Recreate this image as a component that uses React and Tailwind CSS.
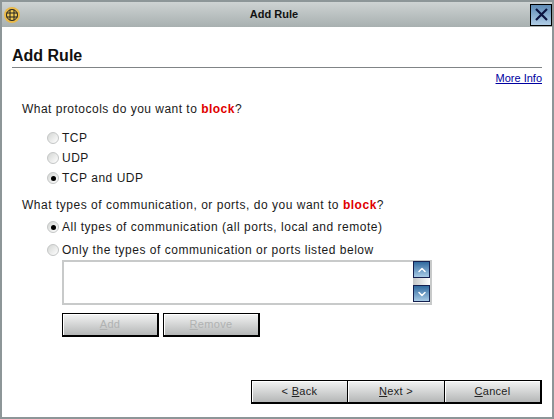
import React from 'react';
import { ChevronUp, ChevronDown } from 'lucide-react';

const Radio = ({ checked }) => (
  <span className="flex h-[12px] w-[12px] shrink-0 items-center justify-center rounded-full border border-[#c4c6c6] bg-gradient-to-br from-[#d4d6d4] to-white">
    {checked && <span className="h-[5px] w-[5px] rounded-full bg-black" />}
  </span>
);

const Option = ({ checked, label, className }) => (
  <div className={`flex h-[20px] items-center gap-[3px] ${className}`}>
    <Radio checked={checked} />
    <span className="tracking-[0.52px] text-[#1a1a1a]">{label}</span>
  </div>
);

const Button = ({ children, disabled, className }) => (
  <button className={`h-[24px] border-t border-l border-r-2 border-b-2 border-black bg-gradient-to-b from-[#f3f4f4] to-[#b5b7b7] text-[11px] tracking-[0.3px] shadow-[inset_1px_1px_0_#fff] ${disabled ? 'text-[#b0b2b2]' : 'text-[#222]'} ${className}`}>
    {children}
  </button>
);

const ScrollBtn = ({ children }) => (
  <div className="flex h-[17px] w-[17px] items-center justify-center border-[1.5px] border-[#14204f] bg-gradient-to-b from-[#2f6a9f] to-[#a8cbe6] text-white">
    {children}
  </div>
);

const App = () => {
  return (
    <div className="flex h-[419px] w-[554px] flex-col overflow-hidden border-x-2 border-b-2 border-t-2 border-[#8d9698] bg-white font-['Liberation_Sans',sans-serif] text-[12px]">
      {/* Title bar */}
      <div className="flex h-[25px] shrink-0 items-center justify-between bg-gradient-to-b from-[#ced3d3] to-[#a8b0b0] pl-[2px]">
        <svg width="16" height="16" viewBox="0 0 16 16">
          <circle cx="8" cy="8" r="8" fill="#e9b949" />
          <circle cx="8" cy="8" r="5.5" fill="#f3cb55" stroke="#222" strokeWidth="1" />
          <path d="M2.5 6h11M2.5 10h11M6 2.8v10.4M10 2.8v10.4" stroke="#222" strokeWidth="1" fill="none" />
        </svg>
        <span className="-ml-[2px] text-[11px] font-bold text-[#111]">Add Rule</span>
        <div className="flex h-[22px] w-[22px] items-center justify-center border border-black bg-gradient-to-b from-[#5e8bb5] to-[#b0cde6]">
          <svg width="13" height="13" viewBox="0 0 13 13">
            <path d="M1 1l11 11M12 1L1 12" stroke="#0c1440" strokeWidth="2.2" fill="none" />
          </svg>
        </div>
      </div>

      <div className="flex flex-1 flex-col pl-[10px] pr-[10px]">
        <h1 className="mt-[19px] border-b border-[#808486] pb-[1px] text-[16px] font-bold leading-[20px] text-[#111]">Add Rule</h1>
        <div className="mt-[4px] text-right text-[11px] leading-[13px]">
          <a className="text-[#0000a0] underline">More Info</a>
        </div>

        <div className="pl-[10px]">
          <p className="mt-[17px] leading-[14px] tracking-[0.48px] text-[#1a1a1a]">
            What protocols do you want to <b className="text-[#e00000]">block</b>?
          </p>
          <div className="mt-[12px] pl-[25px]">
            <Option label="TCP" />
            <Option label="UDP" />
            <Option checked label="TCP and UDP" />
          </div>
          <p className="mt-[10px] leading-[14px] tracking-[0.52px] text-[#1a1a1a]">
            What types of communication, or ports, do you want to <b className="text-[#e00000]">block</b>?
          </p>
          <div className="mt-[5px] pl-[25px]">
            <Option checked className="mb-[3px]" label="All types of communication (all ports, local and remote)" />
            <Option label="Only the types of communication or ports listed below" />
          </div>
          <div className="ml-[40px] w-[370px]">
            <div className="flex h-[45px] items-start justify-end border-2 border-[#c8caca]">
              <div className="-mt-[1px] flex h-[41px] flex-col justify-between bg-gradient-to-r from-[#c4c6c6] to-white">
                <ScrollBtn><ChevronUp size={12} strokeWidth={3} /></ScrollBtn>
                <ScrollBtn><ChevronDown size={12} strokeWidth={3} /></ScrollBtn>
              </div>
            </div>
            <div className="mt-[8px] flex gap-[4px]">
              <Button disabled className="w-[97px]"><u>A</u>dd</Button>
              <Button disabled className="w-[97px]"><u>R</u>emove</Button>
            </div>
          </div>
        </div>

        <div className="mt-[43px] flex justify-end">
          <Button className="w-[98px]">&lt; <u>B</u>ack</Button>
          <Button className="-ml-[2px] w-[99px]"><u>N</u>ext &gt;</Button>
          <Button className="-ml-[2px] w-[98px]"><u>C</u>ancel</Button>
        </div>
      </div>
    </div>
  );
};

export default App;
